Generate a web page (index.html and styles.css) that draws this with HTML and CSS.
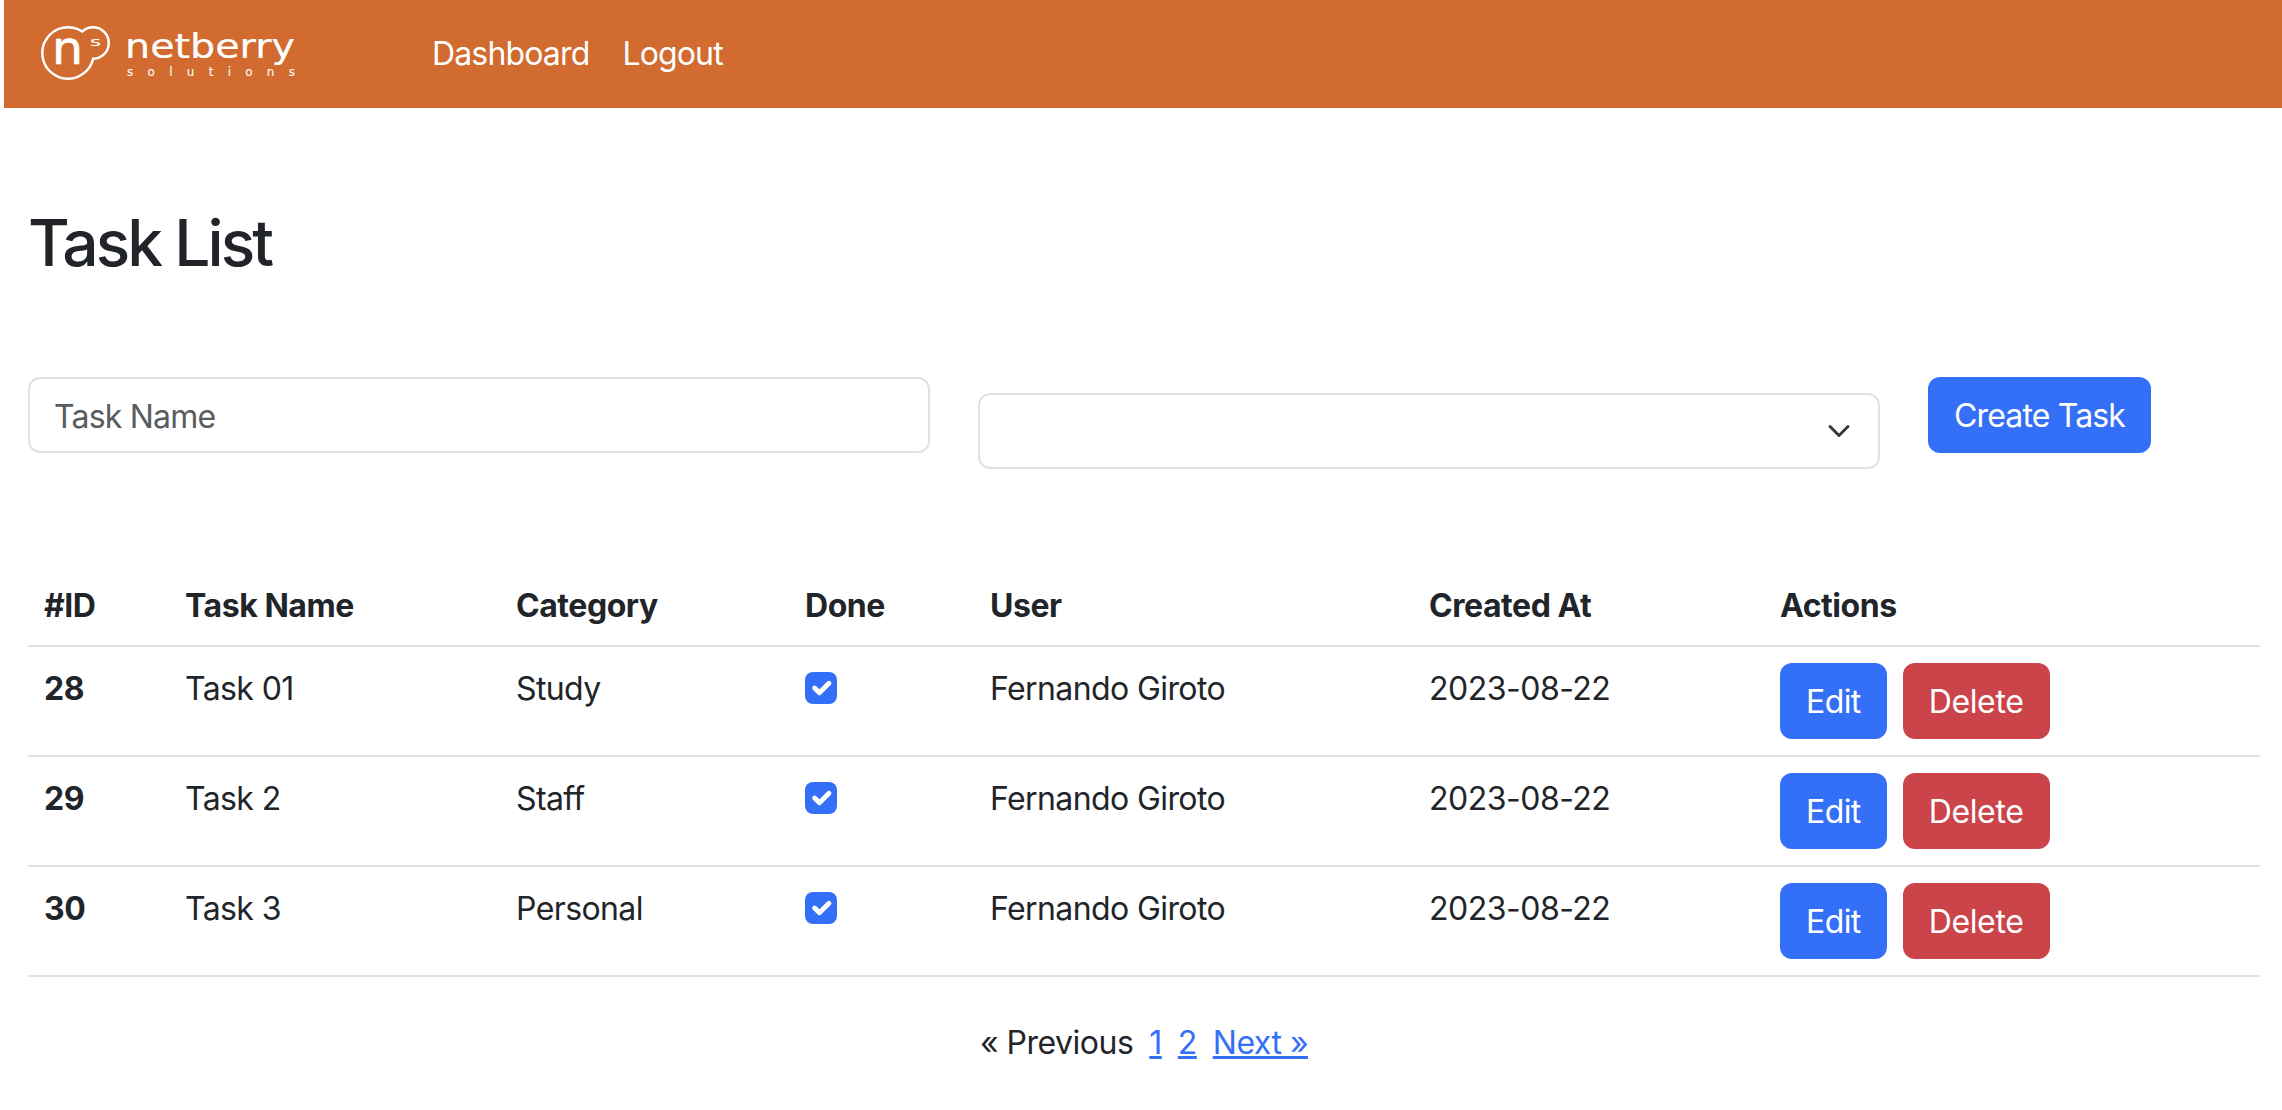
FILE: index.html
```html
<!DOCTYPE html>
<html lang="en">
<head>
<meta charset="utf-8">
<title>Task List</title>
<link rel="stylesheet" href="styles.css">
</head>
<body>
<nav class="navbar">
  <svg class="logo" width="300" height="78" viewBox="20 13 300 78">
    <circle class="ring" cx="93" cy="41" r="15.5"/>
    <circle class="ring" cx="68" cy="51" r="25.5"/>
    <circle class="ring-fill" cx="68" cy="51" r="24.5"/>
    <circle class="ring-fill" cx="93" cy="41" r="14.5"/>
    <text class="mark-n" x="52" y="62" textLength="31" lengthAdjust="spacingAndGlyphs">n</text>
    <text class="mark-s" x="90" y="44" textLength="11" lengthAdjust="spacingAndGlyphs">s</text>
    <text class="logo-name" x="125" y="56" textLength="170" lengthAdjust="spacingAndGlyphs">netberry</text>
    <text class="logo-sub" x="127" y="74" textLength="168" lengthAdjust="spacing">solutions</text>
  </svg>
  <div class="nav-links">
    <a class="nav-link">Dashboard</a>
    <a class="nav-link">Logout</a>
  </div>
</nav>
<main class="content">
  <h1 class="title">Task List</h1>
  <form class="task-form">
    <input class="field field-input" type="text" placeholder="Task Name">
    <div class="field field-select">
      <svg class="chevron" width="24" height="24" viewBox="0 0 16 16"><path d="M2 5l6 6 6-6"/></svg>
    </div>
    <button class="btn btn-primary btn-create" type="button">Create Task</button>
  </form>
  <table class="tasks">
    <colgroup>
      <col class="c1"><col class="c2"><col class="c3"><col class="c4"><col class="c5"><col class="c6"><col class="c7">
    </colgroup>
    <thead>
      <tr><th>#ID</th><th>Task Name</th><th>Category</th><th>Done</th><th>User</th><th>Created At</th><th>Actions</th></tr>
    </thead>
    <tbody>
      <tr>
        <th>28</th><td>Task 01</td><td>Study</td>
        <td><span class="check"><svg width="32" height="32" viewBox="0 0 20 20"><path d="M6 10l3 3 6-6"/></svg></span></td>
        <td>Fernando Giroto</td><td class="date">2023-08-22</td>
        <td class="actions"><button class="btn btn-primary" type="button">Edit</button><button class="btn btn-danger" type="button">Delete</button></td>
      </tr>
      <tr>
        <th>29</th><td>Task 2</td><td>Staff</td>
        <td><span class="check"><svg width="32" height="32" viewBox="0 0 20 20"><path d="M6 10l3 3 6-6"/></svg></span></td>
        <td>Fernando Giroto</td><td class="date">2023-08-22</td>
        <td class="actions"><button class="btn btn-primary" type="button">Edit</button><button class="btn btn-danger" type="button">Delete</button></td>
      </tr>
      <tr>
        <th>30</th><td>Task 3</td><td>Personal</td>
        <td><span class="check"><svg width="32" height="32" viewBox="0 0 20 20"><path d="M6 10l3 3 6-6"/></svg></span></td>
        <td>Fernando Giroto</td><td class="date">2023-08-22</td>
        <td class="actions"><button class="btn btn-primary" type="button">Edit</button><button class="btn btn-danger" type="button">Delete</button></td>
      </tr>
    </tbody>
  </table>
  <div class="pagination">
    <span>« Previous</span>
    <a href="#">1</a>
    <a href="#">2</a>
    <a href="#">Next »</a>
  </div>
</main>
</body>
</html>
```
FILE: styles.css
```css
* { box-sizing: border-box; }
html, body { margin: 0; padding: 0; }
body {
  background: #fff;
  color: #212529;
  font-family: Inter, "Liberation Sans", sans-serif;
  font-size: 32px;
  line-height: 1.5;
  letter-spacing: -0.6px;
  padding-left: 4px;
  height: 1110px;
  overflow: hidden;
}
.navbar {
  display: flex;
  align-items: center;
  gap: 112px;
  height: 108px;
  padding-left: 16px;
  background: #d16b2f;
}
.logo { flex: none; overflow: visible; letter-spacing: 0; }
.ring { fill: none; stroke: #fff; stroke-width: 3; }
.ring-fill { fill: #d16b2f; }
.mark-n { fill: #fff; stroke: #fff; stroke-width: .6; font-family: "DejaVu Sans", sans-serif; font-size: 46px; }
.mark-s { fill: #fff; font-family: "DejaVu Sans", sans-serif; font-size: 13px; }
.logo-name { fill: #fff; stroke: #fff; stroke-width: .2; font-family: "DejaVu Sans", sans-serif; font-size: 33px; }
.logo-sub { fill: #fff; fill-opacity: .9; stroke: #fff; stroke-width: .2; font-family: "DejaVu Sans", sans-serif; font-size: 12px; }
.nav-links { display: flex; gap: 33px; letter-spacing: -0.85px; }
.nav-link { color: #fff; }
.content { padding: 0 22px 0 24px; }
.title {
  margin: 96px 0 0;
  font-size: 64px;
  font-weight: 500;
  line-height: 77px;
  letter-spacing: -2.9px;
}
.task-form {
  display: flex;
  align-items: flex-start;
  margin-top: 96px;
}
.field {
  flex: none;
  width: 902px;
  height: 76px;
  border: 2px solid #dee2e6;
  border-radius: 12px;
  background: #fff;
}
.field-input {
  padding: 2px 24px 0;
  font: inherit;
  letter-spacing: -0.8px;
  color: #212529;
  outline: none;
}
.field-input::placeholder { color: #595c5f; opacity: 1; }
.field-select {
  display: flex;
  align-items: center;
  justify-content: flex-end;
  padding-right: 27px;
  margin: 16px 0 0 48px;
}
.chevron { fill: none; stroke: #343a40; stroke-width: 2; stroke-linecap: round; stroke-linejoin: round; }
.btn {
  height: 76px;
  padding: 2px 24px 0;
  border: 2px solid transparent;
  border-radius: 12px;
  color: #fff;
  font: inherit;
  letter-spacing: inherit;
  cursor: pointer;
}
.btn-primary { background: #346ff7; }
.btn-danger { background: #cb444a; letter-spacing: -0.35px; }
.task-form .btn { margin-left: 48px; }
.btn-create { letter-spacing: -0.85px; }
.tasks {
  width: 2232px;
  margin-top: 96px;
  border-collapse: collapse;
  table-layout: fixed;
}
.c1 { width: 141px; }
.c2 { width: 331px; }
.c3 { width: 289px; }
.c4 { width: 185px; }
.c5 { width: 439px; }
.c6 { width: 351px; }
.tasks th, .tasks td {
  padding: 18px 16px 14px;
  text-align: left;
  vertical-align: top;
  border-bottom: 2px solid #dee2e6;
  font-weight: 400;
}
.tasks th { font-weight: 700; letter-spacing: -0.45px; }
.tasks thead th { padding: 17px 16px 15px; }
.tasks td.date { letter-spacing: -0.5px; }
.tasks td.actions { padding: 16px; }
.check {
  display: inline-block;
  width: 32px;
  height: 32px;
  border-radius: 8px;
  background: #346ff7;
  vertical-align: -4px;
}
.check svg { display: block; }
.check path { fill: none; stroke: #fff; stroke-width: 3; stroke-linecap: round; stroke-linejoin: round; }
.actions .btn + .btn { margin-left: 16px; }
.pagination {
  display: flex;
  justify-content: center;
  gap: 16px;
  margin-top: 42px;
  letter-spacing: -0.5px;
}
.pagination a { color: #346ff7; }
```
